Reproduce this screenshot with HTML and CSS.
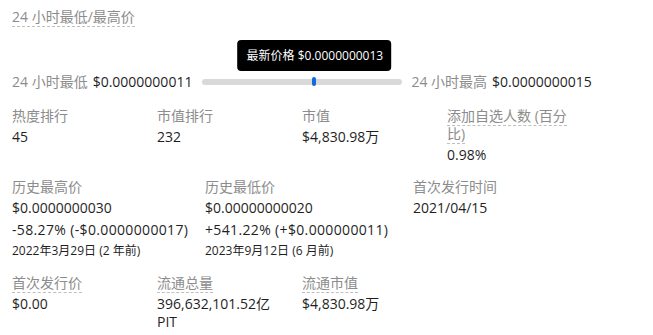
FILE: index.html
```html
<!DOCTYPE html>
<html lang="zh-CN">
<head>
    <meta charset="UTF-8">
    <meta name="viewport" content="width=device-width, initial-scale=1.0">
    <title>24 小时最低/最高价</title>
    <link rel="stylesheet" href="styles.css">
</head>
<body>
    <div class="panel">
        <div class="title"><span class="dashed">24 小时最低/最高价</span></div>

        <div class="range">
            <span class="muted">24 小时最低</span>
            <span class="value">$0.0000000011</span>
            <div class="slider">
                <div class="track"></div>
                <div class="thumb" style="left: 56%"></div>
                <div class="tip" style="left: 56%">最新价格 $0.0000000013</div>
            </div>
            <span class="muted">24 小时最高</span>
            <span class="value">$0.0000000015</span>
        </div>

        <div class="stats">
            <div class="item">
                <div class="label">热度排行</div>
                <div class="value">45</div>
            </div>
            <div class="item">
                <div class="label">市值排行</div>
                <div class="value">232</div>
            </div>
            <div class="item">
                <div class="label">市值</div>
                <div class="value">$4,830.98万</div>
            </div>
            <div class="item narrow">
                <div class="label"><span class="dashed">添加自选人数 (百分比)</span></div>
                <div class="value">0.98%</div>
            </div>
        </div>

        <div class="stats">
            <div class="item ath">
                <div class="label">历史最高价</div>
                <div class="value">$0.0000000030</div>
                <div class="value change">-58.27% (-$0.0000000017)</div>
                <div class="date">2022年3月29日 (2 年前)</div>
            </div>
            <div class="item atl">
                <div class="label">历史最低价</div>
                <div class="value">$0.00000000020</div>
                <div class="value change">+541.22% (+$0.000000011)</div>
                <div class="date">2023年9月12日 (6 月前)</div>
            </div>
            <div class="item">
                <div class="label">首次发行时间</div>
                <div class="value">2021/04/15</div>
            </div>
        </div>

        <div class="stats">
            <div class="item">
                <div class="label"><span class="dashed">首次发行价</span></div>
                <div class="value">$0.00</div>
            </div>
            <div class="item narrow">
                <div class="label"><span class="dashed">流通总量</span></div>
                <div class="value">396,632,101.52亿 PIT</div>
            </div>
            <div class="item">
                <div class="label"><span class="dashed">流通市值</span></div>
                <div class="value">$4,830.98万</div>
            </div>
        </div>
    </div>
</body>
</html>
```

FILE: styles.css
```css
body {
    margin: 0;
    background-color: #fff;
    font-family: "Open Sans", "Noto Sans CJK SC", sans-serif;
    font-size: 14px;
    line-height: 18px;
    color: #1f1f1f;
}
.panel {
    padding: 8px 12px;
}
.title {
    color: #8c8c8c;
    font-size: 14px;
}
.dashed {
    border-bottom: 1px dashed #bfbfbf;
}
.muted {
    color: #8c8c8c;
}
.range {
    display: flex;
    align-items: center;
    gap: 5px;
    margin-top: 47px;
    white-space: nowrap;
}
.slider {
    position: relative;
    width: 200px;
    height: 10px;
    margin: 0 4px 0 5px;
}
.track {
    position: absolute;
    left: 0;
    right: 0;
    top: 2px;
    height: 6px;
    border-radius: 3px;
    background-color: #d9d9d9;
}
.thumb {
    position: absolute;
    top: 0;
    width: 4px;
    height: 9px;
    margin-left: -2px;
    border-radius: 2px;
    background-color: #1668dc;
}
.tip {
    position: absolute;
    bottom: 16px;
    transform: translateX(-50%);
    padding: 6px 8px 6px 9px;
    border-radius: 4px;
    background-color: #000;
    color: #fff;
    font-size: 12px;
    line-height: 19px;
    white-space: nowrap;
}
.stats {
    display: flex;
    flex-wrap: wrap;
    column-gap: 16px;
    margin-top: 14px;
}
.range + .stats {
    margin-top: 16px;
}
.item {
    display: flex;
    flex-direction: column;
    gap: 3px;
    min-width: 129px;
}
.item.narrow {
    width: 129px;
}
.item.ath {
    min-width: 177px;
}
.item.atl {
    min-width: 192px;
}
.value + .value {
    margin-top: 1px;
}
.change {
    letter-spacing: 0.35px;
}
.label {
    color: #8c8c8c;
}
.date {
    font-size: 12px;
}
```
